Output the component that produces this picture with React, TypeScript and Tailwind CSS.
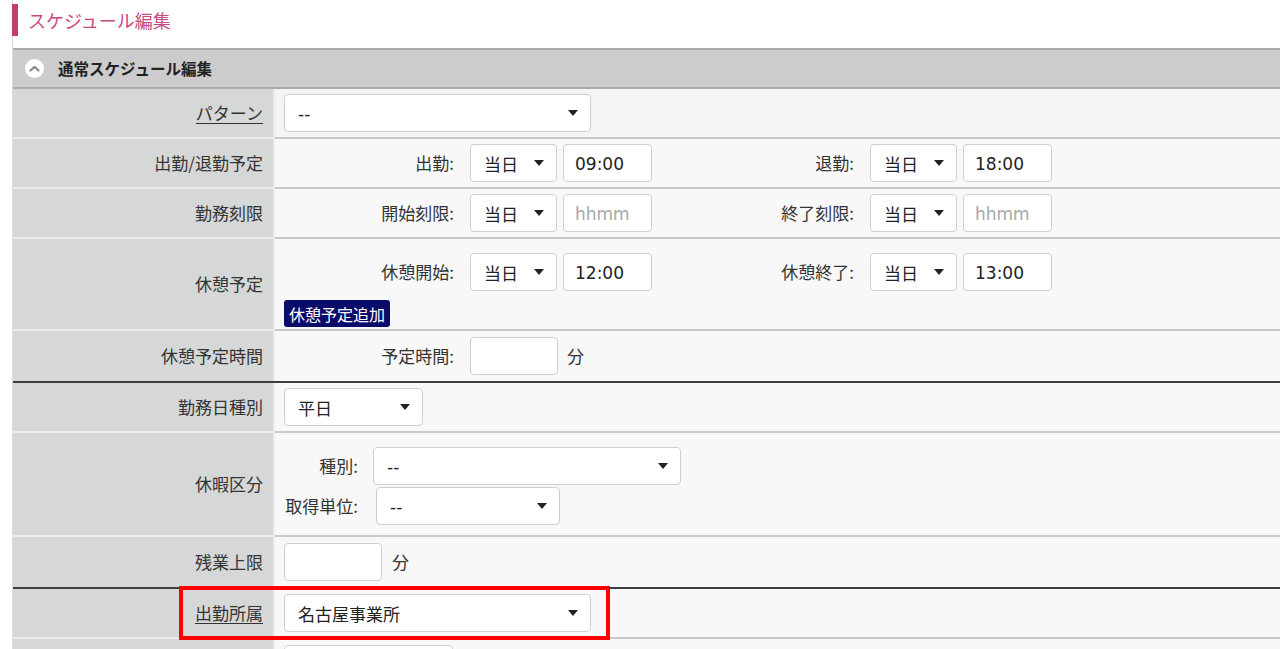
import React from "react";

const FONT = { fontFamily: '"DejaVu Sans", "Noto Sans CJK JP", sans-serif' };
const JP = { fontFamily: '"Noto Sans CJK JP", sans-serif' };

const isJP = (s: string) => /[\u3000-\u9fff]/.test(s);

function Arrow() {
  return (
    <svg width="10" height="6" viewBox="0 0 10 6" className="shrink-0">
      <path d="M0 0 L10 0 L5 6 Z" fill="#222" />
    </svg>
  );
}

function Val({ text, className = "" }: { text: string; className?: string }) {
  return isJP(text) ? (
    <span className={`relative top-[1px] ${className}`} style={JP}>{text}</span>
  ) : (
    <span className={`relative top-[2px] ${className}`}>{text}</span>
  );
}

function Select({ value, w, className = "" }: { value: string; w: string; className?: string }) {
  return (
    <div
      className={`h-[38px] ${w} bg-white border border-[#cfcfcf] rounded-[4px] flex items-center justify-between pl-[13px] pr-[12px] text-[17px] text-[#222] ${className}`}
    >
      <Val text={value} />
      <Arrow />
    </div>
  );
}

function Input({ value, placeholder, w = "w-[89px]", className = "" }: { value?: string; placeholder?: string; w?: string; className?: string }) {
  return (
    <div
      className={`h-[38px] ${w} bg-white border border-[#cfcfcf] rounded-[4px] flex items-center pl-[11px] text-[17px] ${className}`}
    >
      {value ? <Val text={value} className="text-[#222]" /> : placeholder ? <Val text={placeholder} className="text-[#a8a8a8]" /> : null}
    </div>
  );
}

function Group({ label, value, ph }: { label: string; value?: string; ph?: string }) {
  return (
    <div className="w-[400px] flex items-center shrink-0">
      <div className="w-[170px] text-right text-[17px] text-[#333]" style={JP}>{label}</div>
      <Select value="当日" w="w-[87px]" className="ml-[16px]" />
      <Input value={value} placeholder={ph} className="ml-[6px]" />
    </div>
  );
}

function Row({
  label,
  underline = false,
  h,
  dark = false,
  top = false,
  contentBg = "bg-[#f8f8f8]",
  children,
}: {
  label: string;
  underline?: boolean;
  h: string;
  dark?: boolean;
  top?: boolean;
  contentBg?: string;
  children?: React.ReactNode;
}) {
  return (
    <div className={`flex ${h} shrink-0 ${dark ? "border-b-2 border-[#3f3f3f]" : ""}`}>
      <div
        className={`w-[262px] shrink-0 bg-[#d6d7d7] border-r-2 border-r-[#ececec] flex items-center justify-end pr-[10px] text-[17px] text-[#333] ${
          dark ? "" : "border-b-2 border-b-[#ececec]"
        }`}
        style={JP}
      >
        <span className={underline ? "underline underline-offset-[3px]" : ""}>{label}</span>
      </div>
      <div
        className={`flex-1 ${contentBg} pl-[9px] flex ${top ? "flex-col items-start pt-[14px]" : "items-center"} ${
          dark ? "" : "border-b-2 border-b-[#c9c9c9]"
        }`}
      >
        {children}
      </div>
    </div>
  );
}

export default function App() {
  return (
    <div className="relative w-[1280px] h-[649px] overflow-hidden bg-white" style={FONT}>
      <div className="ml-[12px] border-l border-[#dcdcdc] h-full flex flex-col">
        {/* Title */}
        <div className="h-[48px] shrink-0 flex items-start pt-[4px]">
          <div className="ml-[-1px] w-[6px] h-[32px] bg-[#c43c70]" />
          <div className="ml-[10px] text-[18px] leading-[32px] text-[#c94a80]" style={JP}>スケジュール編集</div>
        </div>
        {/* Section header */}
        <div className="h-[41px] shrink-0 bg-[#cccccc] border-t-2 border-b-2 border-[#ababab] flex items-center">
          <div className="ml-[12px] w-[19px] h-[19px] rounded-full bg-white flex items-center justify-center">
            <svg width="11" height="7" viewBox="0 0 11 7">
              <path d="M1.5 5.5 L5.5 1.8 L9.5 5.5" fill="none" stroke="#8a8a8a" strokeWidth="2.2" strokeLinecap="round" strokeLinejoin="round" />
            </svg>
          </div>
          <div className="ml-[14px] text-[15.5px] font-bold text-[#222]" style={JP}>通常スケジュール編集</div>
        </div>

        <Row label="パターン" underline h="h-[50px]" contentBg="bg-[#f4f4f4]">
          <Select value="--" w="w-[307px]" />
        </Row>
        <Row label="出勤/退勤予定" h="h-[50px]">
          <Group label="出勤:" value="09:00" />
          <Group label="退勤:" value="18:00" />
        </Row>
        <Row label="勤務刻限" h="h-[50px]">
          <Group label="開始刻限:" ph="hhmm" />
          <Group label="終了刻限:" ph="hhmm" />
        </Row>
        <Row label="休憩予定" h="h-[92px]" top>
          <div className="flex">
            <Group label="休憩開始:" value="12:00" />
            <Group label="休憩終了:" value="13:00" />
          </div>
          <div className="mt-[9px] h-[27px] px-[5px] bg-[#0b0b6b] rounded-[3px] text-white text-[16px] flex items-center" style={JP}>
            休憩予定追加
          </div>
        </Row>
        <Row label="休憩予定時間" h="h-[52px]" dark>
          <div className="w-[170px] text-right text-[17px] text-[#333]" style={JP}>予定時間:</div>
          <Input w="w-[88px]" className="ml-[16px]" />
          <span className="ml-[9px] text-[17px] text-[#333]" style={JP}>分</span>
        </Row>
        <Row label="勤務日種別" h="h-[50px]">
          <Select value="平日" w="w-[139px]" />
        </Row>
        <Row label="休暇区分" h="h-[104px]" top>
          <div className="flex items-center">
            <div className="w-[74px] text-right text-[17px] text-[#333]" style={JP}>種別:</div>
            <Select value="--" w="w-[308px]" className="ml-[15px]" />
          </div>
          <div className="flex items-center mt-[2px]">
            <div className="w-[74px] text-right text-[17px] text-[#333] whitespace-nowrap" style={JP}>取得単位:</div>
            <Select value="--" w="w-[184px]" className="ml-[18px]" />
          </div>
        </Row>
        <Row label="残業上限" h="h-[52px]" dark>
          <Input w="w-[98px]" />
          <span className="ml-[10px] text-[17px] text-[#333]" style={JP}>分</span>
        </Row>
        <Row label="出勤所属" underline h="h-[50px]">
          <Select value="名古屋事業所" w="w-[307px]" />
        </Row>
        <div className="flex h-[60px] shrink-0">
          <div className="w-[262px] shrink-0 bg-[#d6d7d7] border-r-2 border-r-[#ececec]" />
          <div className="flex-1 bg-[#f8f8f8] pl-[9px] pt-[6px]">
            <div className="h-[38px] w-[169px] bg-white border border-[#cfcfcf] rounded-[4px]" />
          </div>
        </div>
      </div>
      {/* Red highlight annotation */}
      <div className="absolute left-[179px] top-[586px] w-[431px] h-[54px] border-4 border-[#ff0000] pointer-events-none" />
    </div>
  );
}
